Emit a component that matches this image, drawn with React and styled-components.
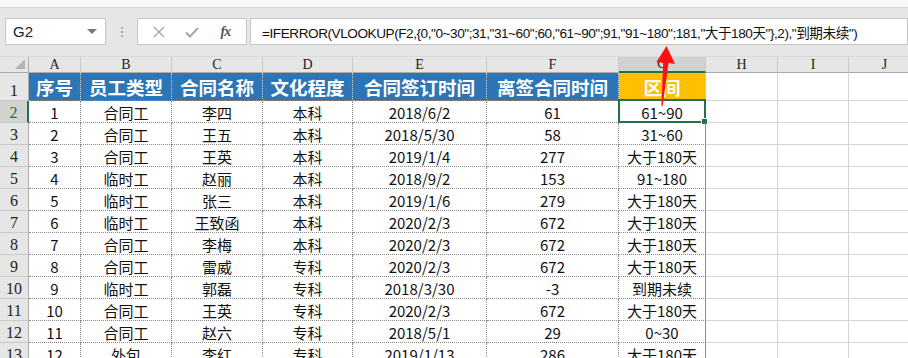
import React from 'react'
import styled, { createGlobalStyle } from 'styled-components'

const GlobalStyle = createGlobalStyle`
  html, body {
    margin: 0;
    padding: 0;
  }
  body {
    width: 908px;
    height: 358px;
    overflow: hidden;
    background: #ffffff;
    font-family: "Noto Sans CJK SC", "Noto Sans", sans-serif;
  }
`

const COLS = [29, 52, 91, 91, 90, 134, 132, 87, 72, 71, 72]
const LETTERS = ['A', 'B', 'C', 'D', 'E', 'F', 'G', 'H', 'I', 'J']
const HEADERS = ['序号', '员工类型', '合同名称', '文化程度', '合同签订时间', '离签合同时间', '区间']

const ROWS = [
  ['1', '合同工', '李四', '本科', '2018/6/2', '61', '61~90'],
  ['2', '合同工', '王五', '本科', '2018/5/30', '58', '31~60'],
  ['3', '合同工', '王英', '本科', '2019/1/4', '277', '大于180天'],
  ['4', '临时工', '赵丽', '本科', '2018/9/2', '153', '91~180'],
  ['5', '临时工', '张三', '本科', '2019/1/6', '279', '大于180天'],
  ['6', '临时工', '王致函', '本科', '2020/2/3', '672', '大于180天'],
  ['7', '合同工', '李梅', '本科', '2020/2/3', '672', '大于180天'],
  ['8', '合同工', '雷威', '专科', '2020/2/3', '672', '大于180天'],
  ['9', '临时工', '郭磊', '专科', '2018/3/30', '-3', '到期未续'],
  ['10', '合同工', '王英', '专科', '2020/2/3', '672', '大于180天'],
  ['11', '合同工', '赵六', '专科', '2018/5/1', '29', '0~30'],
  ['12', '外包', '李红', '专科', '2019/1/13', '286', '大于180天'],
]

const FORMULA = '=IFERROR(VLOOKUP(F2,{0,"0~30";31,"31~60";60,"61~90";91,"91~180";181,"大于180天"},2),"到期未续")'

const Page = styled.div`
  position: relative;
  width: 908px;
  height: 358px;
  overflow: hidden;
  background: #e6e6e6;
`

const RibbonEdge = styled.div`
  height: 7px;
  background: #f7f7f7;
  border-bottom: 1px solid #d6d6d6;
`

const FormulaBar = styled.div`
  height: 27px;
  padding: 10px 0 11px 5px;
  display: flex;
  align-items: stretch;
  border-bottom: 1px solid #dadada;
`

const Box = styled.div`
  background: #ffffff;
  border: 1px solid #c6c6c6;
  box-sizing: border-box;
  display: flex;
  align-items: center;
`

const NameBox = styled(Box)`
  width: 101px;
  padding: 0 8px 0 7px;
  justify-content: space-between;
  font-family: "Liberation Sans", sans-serif;
  font-size: 15px;
  color: #222;
`

const Caret = styled.span`
  width: 0;
  height: 0;
  border-left: 5px solid transparent;
  border-right: 5px solid transparent;
  border-top: 5px solid #7a7a7a;
`

const Grip = styled.div`
  width: 31px;
  display: flex;
  flex-direction: column;
  align-items: center;
  justify-content: center;
  gap: 2px;
`

const GripDot = styled.span`
  width: 2px;
  height: 2px;
  background: #a8a8a8;
`

const ButtonsBox = styled(Box)`
  width: 110px;
  justify-content: space-around;
  padding: 0 4px;
  margin-right: 3px;
`

const IconSlot = styled.span`
  width: 24px;
  display: flex;
  justify-content: center;
  align-items: center;
`

const Fx = styled.span`
  font-family: "Liberation Serif", serif;
  font-style: italic;
  font-weight: bold;
  font-size: 14px;
  color: #555;
  letter-spacing: -1px;
`

const FormulaBox = styled(Box)`
  flex: 1;
  padding-left: 11px;
  font-family: "Liberation Sans", "Noto Sans CJK SC", sans-serif;
  font-size: 13.6px;
  letter-spacing: -0.45px;
  color: #111;
  white-space: nowrap;
  overflow: hidden;
`

const Sheet = styled.div`
  display: grid;
  grid-template-columns: ${COLS.map(c => c + 'px').join(' ')};
  grid-template-rows: 16px 28px repeat(13, 22px);
  background: #ffffff;
`

const Corner = styled.div`
  background: #e6e6e6;
  border-right: 1px solid #ababab;
  border-bottom: 1px solid #ababab;
  display: flex;
  align-items: flex-end;
  justify-content: flex-end;
  padding: 0 3px 3px 0;
`

const CornerTri = styled.span`
  width: 0;
  height: 0;
  border-left: 10px solid transparent;
  border-bottom: 10px solid #b4b4b4;
`

const ColHead = styled.div`
  background: ${p => (p.active ? '#d2d2d2' : '#e6e6e6')};
  border-right: 1px solid #c9c9c9;
  border-bottom: ${p => (p.active ? '2px solid #217346' : '1px solid #ababab')};
  font-family: "Liberation Serif", serif;
  font-size: 14px;
  color: #222;
  display: flex;
  align-items: center;
  justify-content: center;
  line-height: 1;
`

const RowHead = styled.div`
  background: ${p => (p.active ? '#d2d2d2' : '#e6e6e6')};
  border-right: ${p => (p.active ? '2px solid #217346' : '1px solid #ababab')};
  border-bottom: 1px solid #c9c9c9;
  font-family: "Liberation Serif", serif;
  font-size: 16px;
  color: ${p => (p.active ? '#217346' : '#222')};
  display: flex;
  align-items: flex-end;
  justify-content: center;
  padding-bottom: 1px;
  line-height: 1;
`

const TitleCell = styled.div`
  background: ${p => (p.accent ? '#ffc000' : '#2e75b6')};
  color: #ffffff;
  font-weight: bold;
  font-size: 18.5px;
  border-right: 1px dotted #cfd8e2;
  border-bottom: 1px dotted #8a8a8a;
  display: flex;
  align-items: center;
  justify-content: center;
  white-space: nowrap;
  overflow: hidden;
`

const Cell = styled.div`
  position: relative;
  font-size: 15px;
  color: #111;
  border-right: ${p => (p.edge ? '1px solid #8c8c8c' : '1px dotted #8a8a8a')};
  border-bottom: 1px dotted #8a8a8a;
  display: flex;
  align-items: center;
  justify-content: center;
  white-space: nowrap;
  padding-top: 1px;
  box-sizing: border-box;
`

const EmptyCell = styled.div`
  border-right: 1px solid #d4d4d4;
  border-bottom: 1px solid #d4d4d4;
`

const Selection = styled.div`
  position: absolute;
  left: -1px;
  top: -2px;
  right: -1px;
  bottom: -1px;
  border: 2px solid #217346;
  pointer-events: none;
`

const FillHandle = styled.span`
  position: absolute;
  right: -4px;
  bottom: -4px;
  width: 5px;
  height: 5px;
  background: #217346;
  border: 1px solid #ffffff;
`

const Arrow = styled.svg`
  position: absolute;
  left: 0;
  top: 0;
  pointer-events: none;
`

const CrossIcon = () => (
  <svg width="14" height="14" viewBox="0 0 14 14">
    <path d="M2 2 L12 12 M12 2 L2 12" stroke="#a6a6a6" strokeWidth="1.4" fill="none" />
  </svg>
)

const CheckIcon = () => (
  <svg width="16" height="14" viewBox="0 0 16 14">
    <path d="M2 7.5 L6 11.5 L14 3" stroke="#a6a6a6" strokeWidth="2" fill="none" />
  </svg>
)

const App = () => {
  return (
    <Page>
      <GlobalStyle />
      <RibbonEdge />

      <FormulaBar>
        <NameBox>
          <span>G2</span>
          <Caret />
        </NameBox>
        <Grip>
          <GripDot />
          <GripDot />
          <GripDot />
        </Grip>
        <ButtonsBox>
          <IconSlot><CrossIcon /></IconSlot>
          <IconSlot><CheckIcon /></IconSlot>
          <IconSlot><Fx>fx</Fx></IconSlot>
        </ButtonsBox>
        <FormulaBox>{FORMULA}</FormulaBox>
      </FormulaBar>

      <Sheet>
        <Corner><CornerTri /></Corner>
        {LETTERS.map(l => (
          <ColHead key={l} active={l === 'G'}>{l}</ColHead>
        ))}

        <RowHead>1</RowHead>
        {HEADERS.map((h, i) => (
          <TitleCell key={h} accent={i === 6}>{h}</TitleCell>
        ))}
        <EmptyCell />
        <EmptyCell />
        <EmptyCell />

        {ROWS.map((row, r) => (
          <React.Fragment key={r}>
            <RowHead active={r === 0}>{r + 2}</RowHead>
            {row.map((v, c) => (
              <Cell key={c} edge={c === 6}>
                {v}
                {r === 0 && c === 6 && (
                  <Selection>
                    <FillHandle />
                  </Selection>
                )}
              </Cell>
            ))}
            <EmptyCell />
            <EmptyCell />
            <EmptyCell />
          </React.Fragment>
        ))}

        <RowHead>13</RowHead>
        {COLS.slice(1).map((c, i) => (i < 7 ? <Cell key={i} edge={i === 6} /> : <EmptyCell key={i} />))}
      </Sheet>

      <Arrow width="908" height="358" viewBox="0 0 908 358">
        <polygon
          points="666.5,46 675,64 668.5,63 662.6,106 661.4,106 663.2,63 656.5,62"
          fill="#ff1010"
        />
      </Arrow>
    </Page>
  )
}

export default App
